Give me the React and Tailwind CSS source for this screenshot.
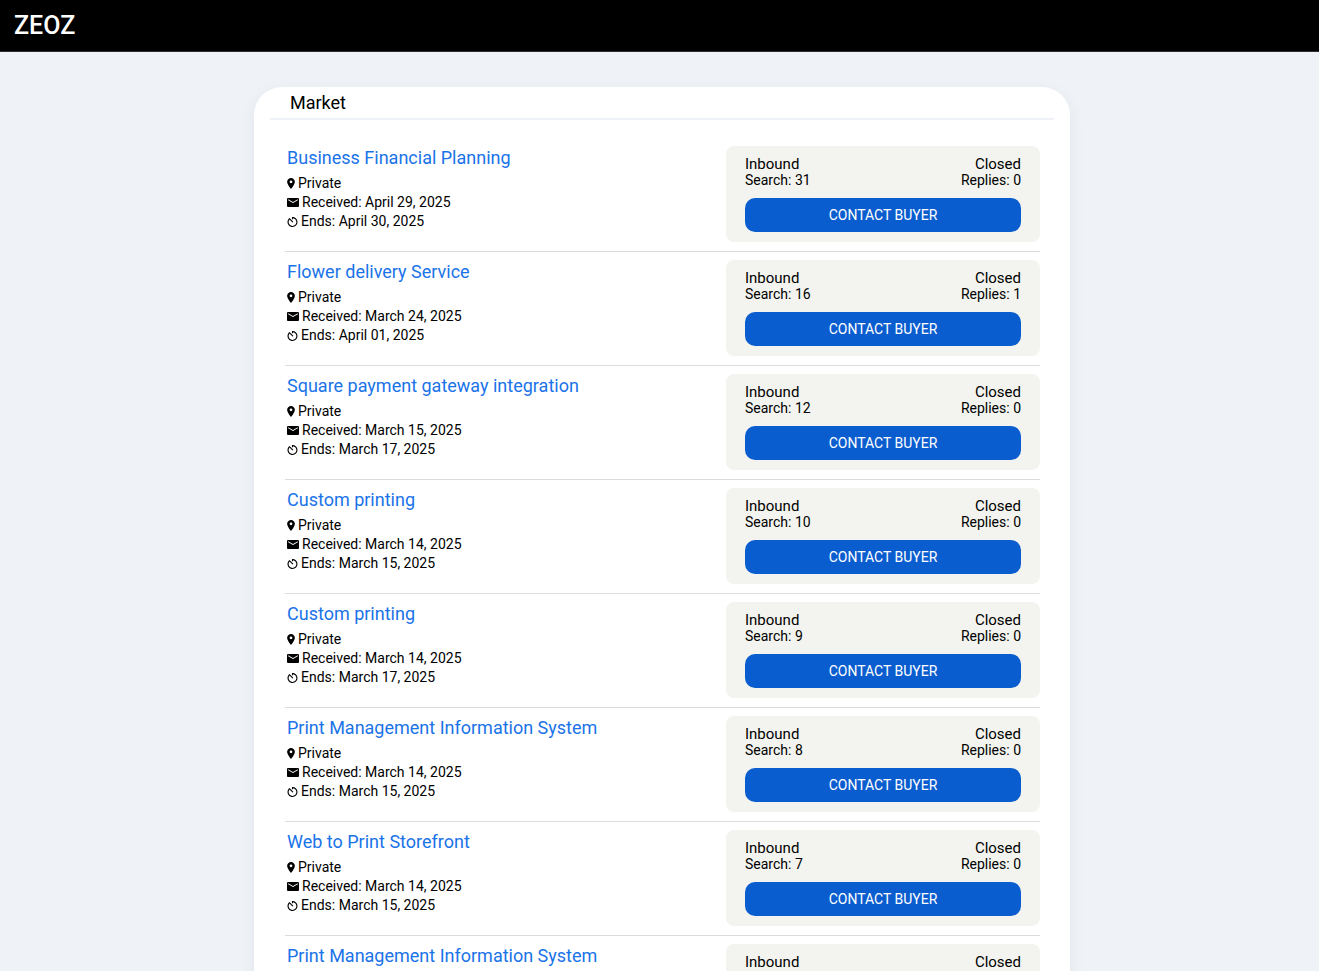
import React from 'react';

const listings = [
  { id: 1, title: 'Business Financial Planning', received: 'April 29, 2025', ends: 'April 30, 2025', search: 31, replies: 0 },
  { id: 2, title: 'Flower delivery Service', received: 'March 24, 2025', ends: 'April 01, 2025', search: 16, replies: 1 },
  { id: 3, title: 'Square payment gateway integration', received: 'March 15, 2025', ends: 'March 17, 2025', search: 12, replies: 0 },
  { id: 4, title: 'Custom printing', received: 'March 14, 2025', ends: 'March 15, 2025', search: 10, replies: 0 },
  { id: 5, title: 'Custom printing', received: 'March 14, 2025', ends: 'March 17, 2025', search: 9, replies: 0 },
  { id: 6, title: 'Print Management Information System', received: 'March 14, 2025', ends: 'March 15, 2025', search: 8, replies: 0 },
  { id: 7, title: 'Web to Print Storefront', received: 'March 14, 2025', ends: 'March 15, 2025', search: 7, replies: 0 },
  { id: 8, title: 'Print Management Information System', received: 'March 14, 2025', ends: 'March 15, 2025', search: 7, replies: 0 }
];

const PinIcon = () => (
  <svg className="w-2 h-[11px]" viewBox="5 2 14 20" fill="currentColor" aria-hidden="true">
    <path d="M12 2C8.13 2 5 5.13 5 9c0 5.25 7 13 7 13s7-7.75 7-13c0-3.87-3.13-7-7-7zm0 9.5a2.5 2.5 0 0 1 0-5 2.5 2.5 0 0 1 0 5z" />
  </svg>
);

const MailIcon = () => (
  <svg className="w-3 h-[9px]" viewBox="2 4 20 16" preserveAspectRatio="none" fill="currentColor" aria-hidden="true">
    <path d="M20 4H4c-1.1 0-1.99.9-1.99 2L2 18c0 1.1.9 2 2 2h16c1.1 0 2-.9 2-2V6c0-1.1-.9-2-2-2zm0 4l-8 5-8-5V6l8 5 8-5v2z" />
  </svg>
);

const TimerIcon = () => (
  <svg className="w-[11px] h-[10px]" viewBox="3 3 18 18" fill="currentColor" aria-hidden="true">
    <path d="M11 3v4h2V5.080c3.390.490 6 3.390 6 6.920 0 3.870-3.130 7-7 7s-7-3.130-7-7c0-1.680.590-3.220 1.580-4.420L12 13l1.410-1.410-6.800-6.800v.020C4.420 6.450 3 9.050 3 12c0 4.970 4.020 9 9 9a9 9 0 0 0 0-18h-1z" />
  </svg>
);

const ListingRow = ({ listing }) => (
  <li className="flex justify-between border-b border-[#dcdcdc] pt-2 pb-[9px]">
    <div className="pl-[2px]">
      <h2 className="text-lg leading-6 text-[#1a73e8]">
        <a href="#">{listing.title}</a>
      </h2>
      <div className="mt-1 text-sm leading-[19px]">
        <p className="flex items-center gap-[3px]">
          <PinIcon /> Private
        </p>
        <p className="flex items-center gap-[3px]">
          <MailIcon /> Received: {listing.received}
        </p>
        <p className="flex items-center gap-[3px]">
          <TimerIcon /> Ends: {listing.ends}
        </p>
      </div>
    </div>

    <div className="w-[314px] h-24 rounded-lg bg-[#f3f4ef] px-[19px] pt-[10px]">
      <div className="flex justify-between text-[15px] leading-4">
        <div>
          <p>Inbound</p>
          <p className="text-sm leading-4">Search: {listing.search}</p>
        </div>
        <div className="text-right">
          <p>Closed</p>
          <p className="text-sm leading-4">Replies: {listing.replies}</p>
        </div>
      </div>
      <button
        type="button"
        className="mt-[10px] h-[34px] w-full rounded-[10px] bg-[#0a5dcf] text-sm text-white"
      >
        CONTACT BUYER
      </button>
    </div>
  </li>
);

const App = () => {
  return (
    <div className="min-h-screen bg-[#eff3f8] font-[Roboto,sans-serif] text-black">
      <header className="flex h-[52px] items-center border-b border-[#2b2f33] bg-black px-[14px]">
        <a href="#" className="text-[25px] leading-8 font-medium text-white">ZEOZ</a>
      </header>

      <main className="pt-[35px] pl-[5px]">
        <section className="mx-auto max-w-[816px] rounded-[28px] bg-white px-4 shadow-[0_4px_16px_rgba(0,0,0,0.06)]">
          <h1 className="border-b-2 border-[#eff3f8] px-5 pt-1 pb-[3px] text-lg leading-6">Market</h1>
          <ul className="pt-[18px] pr-[14px] pl-[15px]">
            {listings.map((listing) => (
              <ListingRow key={listing.id} listing={listing} />
            ))}
          </ul>
        </section>
      </main>
    </div>
  );
};

export default App;
